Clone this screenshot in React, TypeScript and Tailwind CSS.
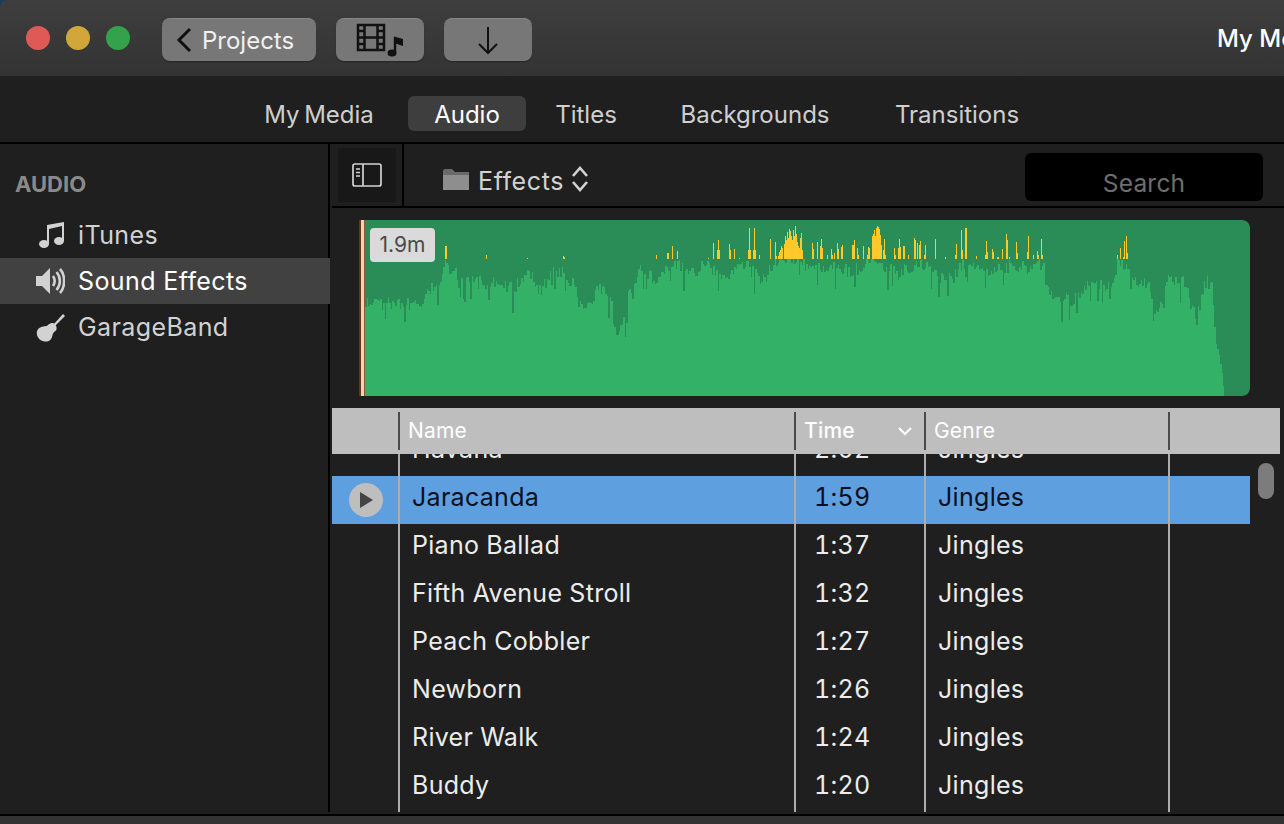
const FONT = "font-['Inter','Noto_Sans',sans-serif]";

const ENV: [number, number][] = [
  [365, 302], [395, 304], [420, 302], [427, 288], [437, 292], [445, 262], [452, 272], [470, 282], [500, 282],
  [513, 290], [527, 268], [540, 292], [550, 272], [563, 270], [572, 285], [580, 305], [590, 300], [600, 288],
  [610, 300], [615, 335], [622, 328], [630, 280], [640, 272], [657, 280], [673, 262], [690, 272], [707, 264],
  [723, 282], [740, 262], [763, 280], [775, 262], [800, 259], [806, 268], [830, 264], [850, 272], [870, 262],
  [885, 266], [895, 274], [920, 262], [935, 276], [953, 278], [962, 262], [970, 264], [985, 276], [1000, 266],
  [1025, 268], [1043, 262], [1045, 288], [1052, 298], [1076, 300], [1085, 285], [1113, 286], [1116, 263],
  [1128, 263], [1131, 282], [1147, 282], [1150, 292], [1155, 316], [1167, 282], [1183, 282], [1190, 304],
  [1196, 318], [1205, 282], [1211, 284], [1213, 312], [1215, 342], [1218, 352], [1222, 376], [1224, 396], [1250, 396],
];

const SPIKES: [number, number][] = [
  [445, 246], [446, 246], [486, 255], [527, 258], [563, 256], [564, 257], [656, 255], [667, 253], [668, 253], [672, 246],
  [677, 251], [708, 258], [713, 243], [717, 250], [718, 240], [719, 250], [729, 244], [730, 250], [734, 249], [739, 258],
  [748, 250], [749, 228], [750, 250], [753, 250], [754, 228], [755, 250], [759, 255], [770, 239], [775, 242], [776, 256],
  [778, 256], [779, 252], [780, 250], [781, 246], [782, 248], [784, 244], [785, 236], [786, 240], [787, 232], [788, 238],
  [789, 229], [790, 231], [791, 236], [792, 240], [793, 230], [794, 236], [795, 226], [796, 234], [797, 242], [798, 246],
  [799, 248], [800, 238], [801, 233], [802, 250], [812, 243], [813, 249], [817, 242], [820, 246], [821, 239], [822, 248],
  [827, 255], [831, 249], [832, 255], [834, 253], [837, 243], [838, 249], [841, 247], [842, 245], [852, 245], [853, 245],
  [854, 240], [857, 248], [858, 255], [863, 246], [867, 255], [868, 247], [869, 248], [872, 236], [873, 234], [874, 230],
  [875, 236], [876, 228], [877, 226], [878, 227], [879, 229], [880, 235], [881, 245], [883, 250], [884, 239], [885, 255],
  [894, 248], [895, 255], [898, 248], [899, 239], [900, 247], [903, 246], [904, 246], [908, 255], [914, 238], [915, 240],
  [917, 243], [919, 245], [920, 241], [924, 255], [925, 245], [935, 239], [945, 257], [955, 255], [956, 244], [961, 230],
  [962, 250], [965, 228], [966, 228], [976, 256], [985, 255], [986, 241], [987, 252], [992, 249], [993, 252], [997, 257],
  [998, 257], [1002, 249], [1006, 234], [1007, 240], [1009, 257], [1016, 242], [1017, 253], [1027, 252], [1028, 236],
  [1033, 255], [1037, 251], [1038, 255], [1041, 239], [1042, 255], [1117, 255], [1120, 248], [1123, 257], [1124, 241],
  [1126, 236], [1127, 253],
];

function envAt(x: number) {
  for (let i = 1; i < ENV.length; i++) {
    if (x <= ENV[i][0]) {
      const [x0, y0] = ENV[i - 1];
      const [x1, y1] = ENV[i];
      return y0 + ((y1 - y0) * (x - x0)) / (x1 - x0);
    }
  }
  return 396;
}

function buildPath() {
  let seed = 1337;
  const rnd = () => {
    seed = (seed * 16807) % 2147483647;
    return seed / 2147483647;
  };
  let d = "M365 396";
  for (let x = 365; x < 1224; x += 1.5) {
    const fading = x > 1212;
    const r = rnd();
    const noise = fading ? 0 : r > 0.9 ? 12 + rnd() * 12 : (rnd() - 0.5) * 14;
    const y = Math.min(396, Math.max(259, envAt(x) + noise));
    d += `L${x} ${y.toFixed(0)}L${x + 1.5} ${y.toFixed(0)}`;
  }
  return d + "L1224 396Z";
}
const WAVE = buildPath();

function Waveform() {
  return (
    <svg width="885" height="176" viewBox="365 220 885 176" shapeRendering="crispEdges" className="block">
      <rect x="365" y="220" width="885" height="176" fill="#2A8C57" />
      <path d={WAVE} fill="#32B167" />
      {SPIKES.map(([x, y]) => (
        <rect key={x} x={x} y={y} width="1" height={259 - y} fill="#FFC92B" />
      ))}
    </svg>
  );
}

const ROWS = [
  ["Havana", "2:02"],
  ["Jaracanda", "1:59"],
  ["Piano Ballad", "1:37"],
  ["Fifth Avenue Stroll", "1:32"],
  ["Peach Cobbler", "1:27"],
  ["Newborn", "1:26"],
  ["River Walk", "1:24"],
  ["Buddy", "1:20"],
];

function Row({ name, time, selected }: { name: string; time: string; selected: boolean }) {
  const text = selected ? "text-[#0b1020]" : "text-[#ececec]";
  return (
    <div className={`flex h-12 w-[918px] text-[25px] tracking-[0.3px] tabular-nums ${text} ${selected ? "bg-[#5E9FE0]" : ""}`}>
      <div className="flex w-[66px] items-center justify-center pl-[2px]">
        {selected && (
          <div className="flex h-[34px] w-[34px] items-center justify-center rounded-full bg-[#BEBEBE]">
            <svg width="14" height="16" viewBox="0 0 14 16">
              <path d="M1 0L14 8L1 16Z" fill="#444" />
            </svg>
          </div>
        )}
      </div>
      <div className="flex w-[396px] items-center border-l-2 border-[#ADADAD] pb-1 pl-3">{name}</div>
      <div className="flex w-[130px] items-center border-l-2 border-[#ADADAD] pb-1 pl-[18px]">{time}</div>
      <div className="flex w-[244px] items-center border-l-2 border-[#ADADAD] pb-1 pl-3">Jingles</div>
      <div className="flex-1 border-l-2 border-[#ADADAD]" />
    </div>
  );
}

function HeaderCell({ width, children }: { width: string; children?: React.ReactNode }) {
  return <div className={`flex h-[38px] items-center border-l-2 border-[#4A4A4A] ${width}`}>{children}</div>;
}

function SideRow({ icon, label, selected }: { icon: React.ReactNode; label: string; selected?: boolean }) {
  return (
    <div
      className={`flex h-[46px] items-center text-[25px] tracking-[0.4px] ${
        selected ? "mr-[-2px] h-[44px] bg-[#414141] text-white" : "text-[#D2D2D2]"
      }`}
    >
      <div className="flex w-[78px] shrink-0 justify-end pr-[13px]">{icon}</div>
      <span className="pt-[2px]">{label}</span>
    </div>
  );
}

const BUTTON =
  "flex h-[43px] shrink-0 rounded-lg border-t border-[#858585] bg-[#777777] shadow-[0_1px_1px_rgba(0,0,0,0.3)]";

export default function App() {
  return (
    <div className={`flex h-[824px] w-[1284px] flex-col overflow-hidden bg-[#1C3A5E] ${FONT}`}>
      {/* title bar */}
      <div className="flex h-[76px] shrink-0 items-start overflow-hidden rounded-tl-lg bg-gradient-to-b from-[#3E3E3E] to-[#333333] pt-[18px] whitespace-nowrap">
        <div className="mt-2 ml-[26px] flex shrink-0 gap-4">
          <div className="h-6 w-6 rounded-full bg-[#DF5A57]" />
          <div className="h-6 w-6 rounded-full bg-[#D1A73A]" />
          <div className="h-6 w-6 rounded-full bg-[#33A24A]" />
        </div>
        <div className={`${BUTTON} ml-8 w-[154px] items-center pl-[14px] text-[24px] text-[#F0F0F0]`}>
          <svg width="16" height="26" viewBox="0 0 16 26" fill="none" stroke="#111" strokeWidth="3" className="mr-[10px]">
            <path d="M14 2L3 13L14 24" />
          </svg>
          <span className="pt-[2px]">Projects</span>
        </div>
        <div className={`${BUTTON} ml-5 w-[88px]`}>
          <svg width="88" height="42" viewBox="0 0 88 42">
            <g fill="none" stroke="#111" strokeWidth="2.5">
              <rect x="22" y="6" width="26" height="25" />
              <path d="M28.500 6V31M41.500 6V31M28.500 18.500H41.500M22 12H28.500M22 18.500H28.500M22 25H28.500M41.500 12H48M41.500 18.500H48M41.500 25H48" />
            </g>
            <path d="M59 18V34" stroke="#111" strokeWidth="2.400" />
            <ellipse cx="56" cy="34" rx="4.500" ry="3.600" fill="#111" />
            <path d="M58 17.500L67 20V27L58 24Z" fill="#111" />
          </svg>
        </div>
        <div className={`${BUTTON} ml-5 w-[88px] items-center justify-center`}>
          <svg width="22" height="30" viewBox="0 0 22 30" fill="none" stroke="#111" strokeWidth="2">
            <path d="M11 2V28M2 19L11 28L20 19" />
          </svg>
        </div>
        <div className="mt-[3px] ml-[685px] shrink-0 text-[24px] font-medium text-white">My Movie</div>
      </div>

      <div className="flex min-h-0 flex-1 flex-col bg-[#1F1F1F]">
        {/* tabs */}
        <div className="flex h-[68px] shrink-0 items-start border-b-2 border-black pt-5 text-[24px] text-[#CFCFCF]">
          <div className="ml-[254px] flex h-[35px] w-[130px] items-center justify-center pt-[2px] [word-spacing:-2px]">My Media</div>
          <div className="ml-6 flex h-[35px] w-[118px] items-center justify-center rounded-md bg-[#3E3E3E] pt-[2px] text-white">Audio</div>
          <div className="ml-[14px] flex h-[35px] w-[92px] items-center justify-center pt-[2px]">Titles</div>
          <div className="ml-[38px] flex h-[35px] w-[170px] items-center justify-center pt-[2px]">Backgrounds</div>
          <div className="ml-[47px] flex h-[35px] w-[140px] items-center justify-center pt-[2px]">Transitions</div>
        </div>

        {/* body */}
        <div className="flex h-[668px] shrink-0">
          <div className="w-[330px] shrink-0 border-r-2 border-black pt-[26px]">
            <div className="mb-[14px] ml-[15px] h-7 text-[22px] leading-7 font-bold text-[#8A8A8A]">AUDIO</div>
            <SideRow
              label="iTunes"
              icon={
                <svg width="28" height="28" viewBox="0 0 28 28" fill="#D2D2D2">
                  <ellipse cx="7" cy="23" rx="5" ry="4" />
                  <ellipse cx="22" cy="20" rx="5" ry="4" />
                  <path d="M10 23H12V8L25 5V20H27V1L10 4Z" />
                </svg>
              }
            />
            <SideRow
              selected
              label="Sound Effects"
              icon={
                <svg width="30" height="30" viewBox="0 0 30 30">
                  <path d="M1 10H7L15 2V28L7 20H1Z" fill="#D2D2D2" />
                  <path d="M18 10C20 13 20 17 18 20M21.500 6C26 11 26 19 21.500 24M25 3C30.500 9 30.500 21 25 27" fill="none" stroke="#D2D2D2" strokeWidth="2.600" />
                </svg>
              }
            />
            <SideRow
              label="GarageBand"
              icon={
                <svg width="29" height="29" viewBox="0 0 29 29" fill="#D2D2D2">
                  <path d="M27 1L29 3L19 13L17.500 11.500Z" />
                  <path d="M18.500 10.500C17 9.500 14 10 12.500 11.500C11 13 10 13 7 13.500C2 14.500 0 18 1 22C2 26 6 29 11 28.500C14.500 28 16 25 16.500 22C17 20 18 19 20 17.500C21 16.500 21 13 18.500 10.500Z" />
                </svg>
              }
            />
          </div>

          <div className="min-w-0 flex-1">
            {/* toolbar */}
            <div className="ml-[2px] flex h-[64px] items-start border-b-2 border-black">
              <div className="mt-1 ml-[6px] flex h-[54px] w-[58px] shrink-0 items-center justify-center bg-[#181818]">
                <svg width="30" height="24" viewBox="0 0 30 24" fill="none" stroke="#D2D2D2" strokeWidth="1.700">
                  <rect x="1" y="1" width="28" height="22" rx="2" />
                  <path d="M11 1V23" />
                  <path d="M4 6H8M4 9.500H8M4 13H8" />
                </svg>
              </div>
              <div className="ml-[6px] h-[62px] w-[2px] shrink-0 bg-black" />
              <svg width="26" height="22" viewBox="0 0 26 22" className="mt-[24px] ml-[39px] shrink-0">
                <path d="M0 3C0 2 1 1 2 1H9L12 4H26V8H0Z" fill="#6A6A6A" />
                <path d="M0 7H26V22H0Z" fill="#8E8E8E" />
              </svg>
              <div className="mt-[21px] ml-[9px] shrink-0 text-[25px] leading-8 tracking-[0.6px] text-[#D2D2D2]">Effects</div>
              <svg width="18" height="28" viewBox="0 0 18 28" fill="none" stroke="#D2D2D2" strokeWidth="2.600" className="mt-[21px] ml-[7px] shrink-0">
                <path d="M2 11L9 3L16 11M2 17L9 25L16 17" />
              </svg>
              <div className="mt-[9px] ml-[436px] flex h-[48px] w-[238px] shrink-0 items-end justify-center rounded-md bg-black pb-[2px] text-[24.500px] leading-8 tracking-[0.2px] text-[#6E6E6E]">
                Search
              </div>
            </div>

            {/* waveform */}
            <div className="relative mt-3 ml-[29px] flex">
              <div className="h-[176px] w-[6px] shrink-0 border-r border-l-2 border-r-[#8A5A30] border-l-[#5C3A1E] bg-[#F6D2AE]" />
              <div className="h-[176px] w-[885px] shrink-0 overflow-hidden rounded-r-lg">
                <Waveform />
              </div>
              <div className="absolute top-2 left-[11px] flex h-[34px] w-[65px] items-center justify-center rounded-[4px] bg-[#DADADA] text-[21px] text-[#4A4A4A]">
                1.9m
              </div>
            </div>

            {/* header */}
            <div className="mt-3 ml-[2px] flex h-[46px] w-[948px] items-center bg-[#BEBEBE] text-[21px] tracking-[0.2px] text-white">
              <div className="w-[66px]" />
              <HeaderCell width="w-[396px] pl-2">Name</HeaderCell>
              <HeaderCell width="w-[130px] justify-between pl-2 pr-[11px] font-medium">
                Time
                <svg width="16" height="10" viewBox="0 0 16 10" fill="none" stroke="white" strokeWidth="2">
                  <path d="M2 2L8 8L14 2" />
                </svg>
              </HeaderCell>
              <HeaderCell width="w-[244px] pl-2">Genre</HeaderCell>
              <HeaderCell width="flex-1" />
            </div>

            {/* rows */}
            <div className="relative ml-[2px] h-[358px] overflow-hidden">
              <div className="mt-[-26px]">
                {ROWS.map(([name, time], i) => (
                  <Row key={name} name={name} time={time} selected={i === 1} />
                ))}
              </div>
              <div className="absolute top-[9px] left-[926px] h-9 w-4 rounded-full bg-[#7C7C7C]" />
            </div>
          </div>
        </div>

        <div className="mt-[2px] min-h-0 flex-1 border-t-2 border-black bg-[#333333]" />
      </div>
    </div>
  );
}
